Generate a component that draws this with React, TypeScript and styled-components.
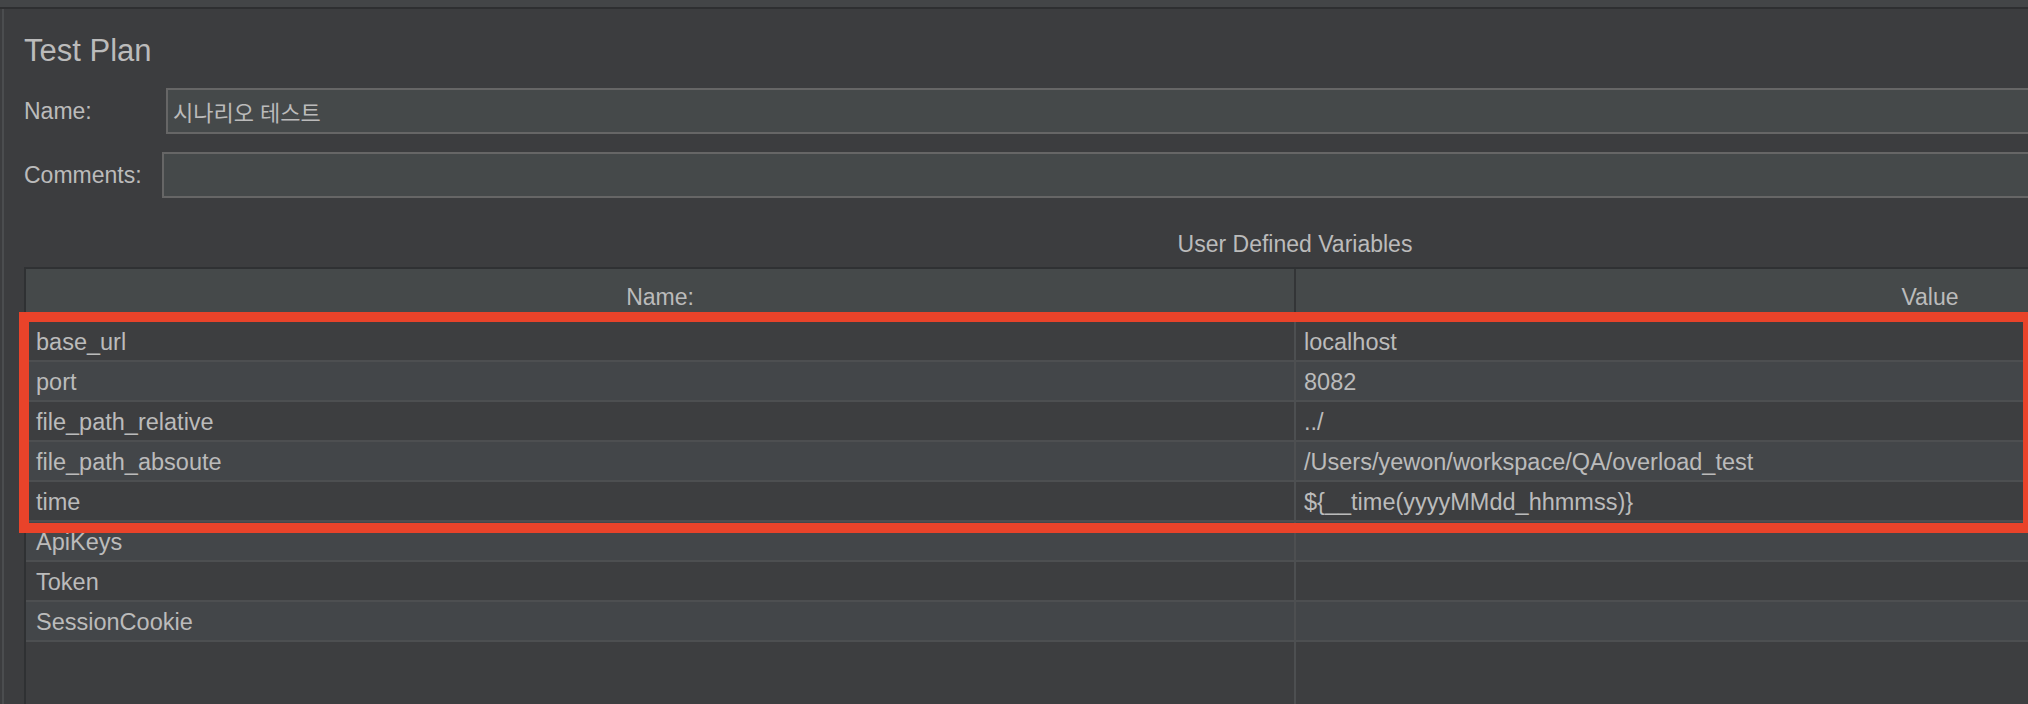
import React from 'react';
import styled, { createGlobalStyle } from 'styled-components';

const GlobalStyle = createGlobalStyle`
  html, body {
    margin: 0;
    padding: 0;
    background: #3c3d3f;
    overflow: hidden;
  }
  body {
    font-family: "Liberation Sans", Arial, "Noto Sans CJK KR", sans-serif;
    color: #bbbbbb;
  }
`;

const Page = styled.div`
  position: relative;
  width: 2028px;
  height: 704px;
  overflow: hidden;
  background: #3c3d3f;
`;

const TopStrip = styled.div`
  height: 7px;
  background: #434547;
  border-bottom: 2px solid #2e2f31;
`;

const Panel = styled.div`
  margin-left: 2px;
  border-left: 2px solid #4b4d4f;
  padding: 22px 0 0 20px;
  width: 2600px;
  height: 695px;
  box-sizing: border-box;
  display: flex;
  flex-direction: column;
`;

const Title = styled.div`
  height: 40px;
  line-height: 40px;
  font-size: 31px;
  color: #bbbbbb;
`;

const FieldRow = styled.div<{ $gap: number }>`
  display: flex;
  align-items: center;
  margin-top: ${(p) => p.$gap}px;
  width: 2542px;
`;

const FieldLabel = styled.div<{ $width: number }>`
  width: ${(p) => p.$width}px;
  flex: none;
  font-size: 23px;
  line-height: 30px;
  color: #bbbbbb;
`;

const TextField = styled.div`
  flex: 1;
  height: 46px;
  box-sizing: border-box;
  border: 2px solid #666666;
  background: #45494a;
  padding-left: 5px;
  display: flex;
  align-items: center;
  font-family: "Liberation Sans", "Noto Sans CJK KR", sans-serif;
  font-size: 22px;
  color: #bbbbbb;
`;

const Caption = styled.div`
  margin-top: 30px;
  width: 2542px;
  height: 32px;
  line-height: 32px;
  text-align: center;
  font-size: 23px;
  color: #bbbbbb;
`;

const Table = styled.div`
  margin-top: 7px;
  width: 2542px;
  border-top: 2px solid #2f3133;
  border-left: 2px solid #2f3133;
  display: flex;
  flex-direction: column;
  flex: 1;
`;

const HeaderRow = styled.div`
  display: flex;
  height: 53px;
  box-sizing: border-box;
  background: #45494a;
  border-bottom: 2px solid #36383a;
`;

const HeaderCell = styled.div<{ $divider?: boolean }>`
  width: ${(p) => (p.$divider ? 1270 : 1268)}px;
  box-sizing: border-box;
  border-right: ${(p) => (p.$divider ? '2px solid #333537' : 'none')};
  padding-top: 6px;
  text-align: center;
  line-height: 45px;
  font-size: 23px;
  color: #bbbbbb;
`;

const Row = styled.div<{ $alt: boolean }>`
  display: flex;
  height: 40px;
  box-sizing: border-box;
  border-bottom: 2px solid #4d4f51;
  background: ${(p) => (p.$alt ? '#434649' : '#3d3e40')};
  overflow: hidden;
`;

const Cell = styled.div<{ $divider?: boolean }>`
  width: ${(p) => (p.$divider ? 1270 : 1268)}px;
  box-sizing: border-box;
  border-right: ${(p) => (p.$divider ? '2px solid #4d4f51' : 'none')};
  padding-left: ${(p) => (p.$divider ? 10 : 8)}px;
  line-height: 40px;
  font-size: 23.5px;
  color: #bbbbbb;
  white-space: nowrap;
`;

const Filler = styled.div`
  display: flex;
  flex: 1;
  background: #3d3e40;
`;

const FillerCell = styled.div<{ $divider?: boolean }>`
  width: ${(p) => (p.$divider ? 1270 : 1268)}px;
  box-sizing: border-box;
  border-right: ${(p) => (p.$divider ? '2px solid #4d4f51' : 'none')};
`;

const Highlight = styled.div`
  position: absolute;
  left: 19px;
  top: 312px;
  width: 2014px;
  height: 221px;
  box-sizing: border-box;
  border: 10px solid #e9432a;
  pointer-events: none;
`;

const variables: Array<[string, string]> = [
  ['base_url', 'localhost'],
  ['port', '8082'],
  ['file_path_relative', '../'],
  ['file_path_absoute', '/Users/yewon/workspace/QA/overload_test'],
  ['time', '${__time(yyyyMMdd_hhmmss)}'],
  ['ApiKeys', ''],
  ['Token', ''],
  ['SessionCookie', ''],
];

export default function App() {
  return (
    <Page>
      <GlobalStyle />
      <TopStrip />
      <Panel>
        <Title>Test Plan</Title>
        <FieldRow $gap={17}>
          <FieldLabel $width={142}>Name:</FieldLabel>
          <TextField>시나리오 테스트</TextField>
        </FieldRow>
        <FieldRow $gap={18}>
          <FieldLabel $width={138}>Comments:</FieldLabel>
          <TextField />
        </FieldRow>
        <Caption>User Defined Variables</Caption>
        <Table>
          <HeaderRow>
            <HeaderCell $divider>Name:</HeaderCell>
            <HeaderCell>Value</HeaderCell>
          </HeaderRow>
          {variables.map(([name, value], i) => (
            <Row key={name} $alt={i % 2 === 1}>
              <Cell $divider>{name}</Cell>
              <Cell>{value}</Cell>
            </Row>
          ))}
          <Filler>
            <FillerCell $divider />
            <FillerCell />
          </Filler>
        </Table>
      </Panel>
      <Highlight />
    </Page>
  );
}
